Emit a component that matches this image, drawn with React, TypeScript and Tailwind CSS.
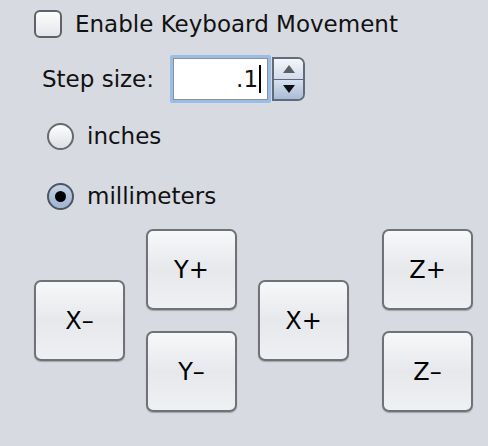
import React from "react";

function JogButton({ label }: { label: string }) {
  return (
    <button className="flex h-[81px] w-[91px] items-center justify-center rounded-[7px] border-2 border-[#6f7277] bg-gradient-to-b from-[#f7f8f9] via-[#e6e8ec] to-[#eef0f3] text-[24px] text-black shadow-[0_1px_1px_rgba(0,0,0,0.25)]">
      {label}
    </button>
  );
}

export default function App() {
  return (
    <div className="h-[446px] w-[488px] bg-[#d7dae0] pl-[34px] pt-[10px] font-['DejaVu_Sans',sans-serif] text-[23px] leading-none text-[#111]">
      <label className="flex items-center gap-[13px]">
        <span className="h-[28px] w-[28px] rounded-[6px] border-2 border-[#5f6267] bg-gradient-to-b from-[#fdfdfd] to-[#e4e6ea]" />
        <span>Enable Keyboard Movement</span>
      </label>

      <div className="mt-[17px] flex items-center pl-[8px]">
        <span>Step size:</span>
        <div className="ml-[16px] rounded-[2px] border-[3px] border-[#98bde6] p-0">
          <div className="flex h-[42px] w-[95px] items-center justify-end border border-[#8e9196] bg-white pr-[6px]">
            <span>.1</span>
            <span className="ml-[1px] h-[28px] w-[2px] bg-black" />
          </div>
        </div>
        <div className="ml-[1px] flex h-[44px] w-[33px] flex-col overflow-hidden rounded-r-[7px] border-2 border-[#5f6a7a]">
          <div className="flex flex-1 items-center justify-center border-b border-[#5f6a7a] bg-gradient-to-b from-[#f3f6fa] to-[#d3dceb]">
            <svg width="12" height="8" viewBox="0 0 12 8"><polygon points="6,0 12,8 0,8" fill="#5a5f66" /></svg>
          </div>
          <div className="flex flex-1 items-center justify-center bg-gradient-to-b from-[#d8e1ee] to-[#a9bcd6]">
            <svg width="12" height="8" viewBox="0 0 12 8"><polygon points="0,0 12,0 6,8" fill="#0c1015" /></svg>
          </div>
        </div>
      </div>

      <div className="mt-[20px] flex items-center gap-[13px] pl-[13px]">
        <span className="h-[27px] w-[27px] rounded-full border-2 border-[#66696e] bg-gradient-to-b from-[#fefefe] to-[#dcdfe4]" />
        <span>inches</span>
      </div>

      <div className="mt-[33px] flex items-center gap-[13px] pl-[13px]">
        <span className="flex h-[27px] w-[27px] items-center justify-center rounded-full border-2 border-[#4c5563] bg-gradient-to-b from-[#c5d3e6] to-[#9fb4d0]">
          <span className="h-[11px] w-[11px] rounded-full bg-black" />
        </span>
        <span>millimeters</span>
      </div>

      <div className="mt-[19px] flex items-center">
        <JogButton label="X–" />
        <div className="ml-[21px] flex flex-col gap-[21px]">
          <JogButton label="Y+" />
          <JogButton label="Y–" />
        </div>
        <div className="ml-[21px]">
          <JogButton label="X+" />
        </div>
        <div className="ml-[33px] flex flex-col gap-[21px]">
          <JogButton label="Z+" />
          <JogButton label="Z–" />
        </div>
      </div>
    </div>
  );
}
